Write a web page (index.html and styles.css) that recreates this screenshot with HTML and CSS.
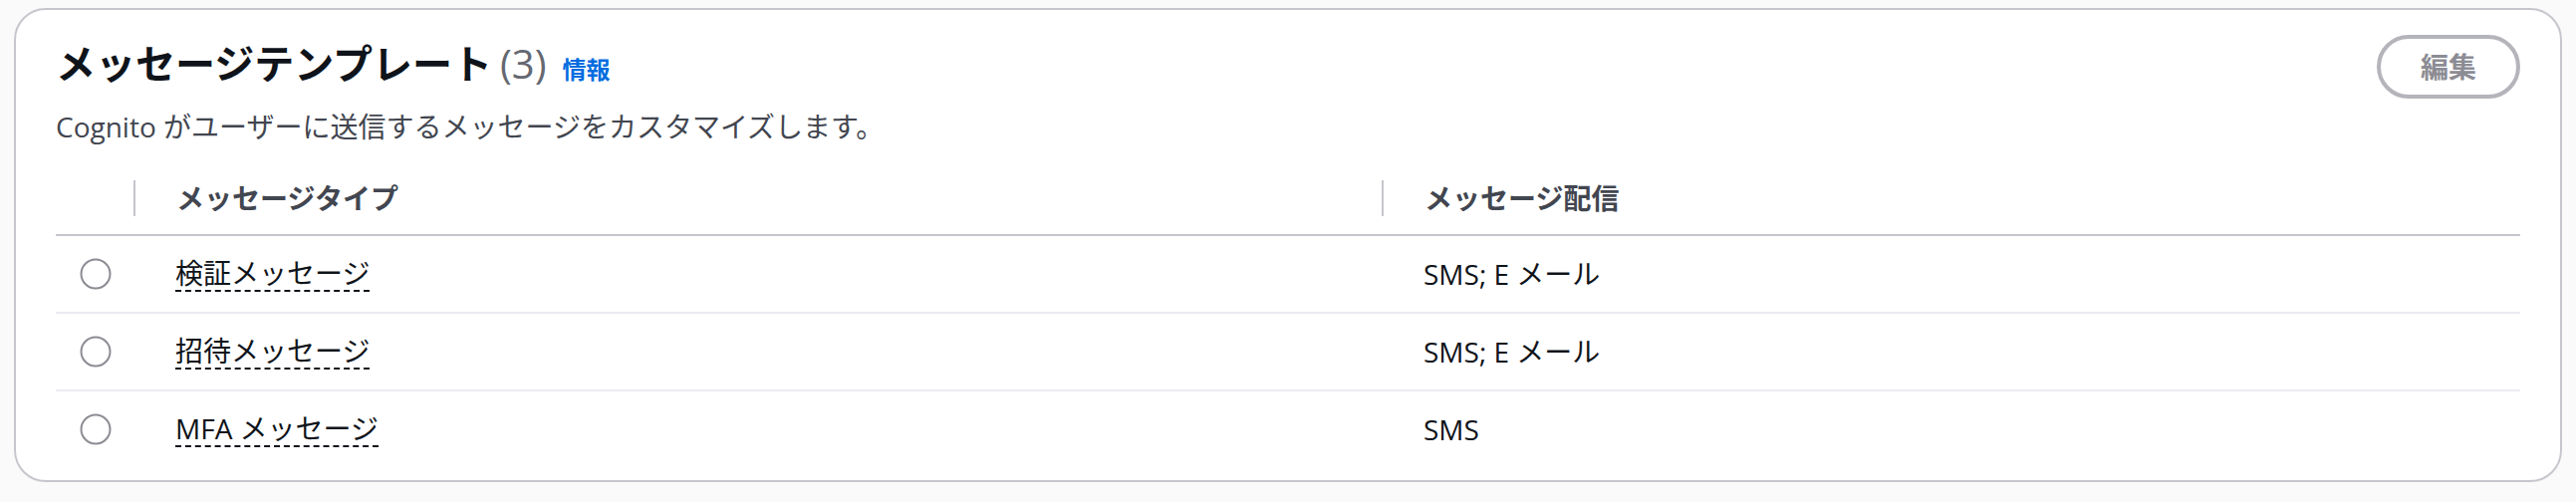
FILE: index.html
```html
<!DOCTYPE html>
<html lang="ja">
<head>
<meta charset="utf-8">
<title>メッセージテンプレート</title>
<link rel="stylesheet" href="styles.css">
</head>
<body>
<div class="container">
  <div class="header">
    <div class="header-top">
      <h2 class="title">メッセージテンプレート <span class="counter">(3)</span><a class="info" href="#">情報</a></h2>
      <button class="btn" disabled>編集</button>
    </div>
    <p class="desc">Cognito がユーザーに送信するメッセージをカスタマイズします。</p>
  </div>
  <div class="table">
    <div class="row head">
      <div class="cell sel"></div>
      <div class="cell th"><div class="th-inner">メッセージタイプ</div></div>
      <div class="cell th"><div class="th-inner">メッセージ配信</div></div>
    </div>
    <div class="row">
      <div class="cell sel"><svg class="radio" width="32" height="32" viewBox="0 0 32 32"><circle cx="16" cy="16" r="14.5" fill="#fff" stroke="#8c8c94" stroke-width="2"/></svg></div>
      <div class="cell td"><span class="trigger">検証メッセージ</span></div>
      <div class="cell td">SMS; E メール</div>
    </div>
    <div class="row">
      <div class="cell sel"><svg class="radio" width="32" height="32" viewBox="0 0 32 32"><circle cx="16" cy="16" r="14.5" fill="#fff" stroke="#8c8c94" stroke-width="2"/></svg></div>
      <div class="cell td"><span class="trigger">招待メッセージ</span></div>
      <div class="cell td">SMS; E メール</div>
    </div>
    <div class="row last">
      <div class="cell sel"><svg class="radio" width="32" height="32" viewBox="0 0 32 32"><circle cx="16" cy="16" r="14.5" fill="#fff" stroke="#8c8c94" stroke-width="2"/></svg></div>
      <div class="cell td"><span class="trigger">MFA メッセージ</span></div>
      <div class="cell td">SMS</div>
    </div>
  </div>
</div>
</body>
</html>
```

FILE: styles.css
```css
* { box-sizing: border-box; }

html, body {
  margin: 0;
  padding: 0;
  background: #fafafa;
}

body {
  font-family: "Open Sans", "Noto Sans CJK JP", sans-serif;
  font-size: 28px;
  line-height: 40px;
  color: #0f141a;
}

.container {
  margin: 8px 14px 0;
  background: #ffffff;
  border: 2px solid #c6c6cd;
  border-radius: 32px;
  padding-bottom: 13px;
}

.header {
  padding: 25px 40px 0;
}

.header-top {
  display: flex;
  align-items: center;
  justify-content: space-between;
  height: 64px;
}

.title {
  margin: 0;
  font-size: 40px;
  line-height: 48px;
  font-weight: 700;
  color: #0f141a;
  display: flex;
  align-items: baseline;
}

.counter {
  font-weight: 400;
  color: #656871;
  margin-left: 8px;
}

.info {
  font-size: 24px;
  font-weight: 700;
  color: #006ce0;
  text-decoration: none;
  margin-left: 16px;
}

.btn {
  height: 64px;
  padding: 0 40px;
  border: 4px solid #b4b4bb;
  border-radius: 32px;
  background: #ffffff;
  color: #8c8c94;
  font-family: "Open Sans", "Noto Sans CJK JP", sans-serif;
  font-size: 28px;
  font-weight: 700;
  line-height: 40px;
}

.desc {
  margin: 8px 0 0;
  color: #424650;
  font-size: 28px;
  line-height: 40px;
}

.table {
  margin: 16px 40px 0;
}

.row {
  display: grid;
  grid-template-columns: 78px 1253px 1fr;
  height: 78px;
  border-bottom: 2px solid #ebebf0;
}

.row.head {
  height: 74px;
  border-bottom: 2px solid #c6c6cd;
}

.row.last {
  border-bottom: none;
  height: 76px;
}

.cell {
  display: flex;
  align-items: center;
}

.sel {
  padding-left: 24px;
}

.radio {
  display: block;
}

.th-inner {
  height: 36px;
  line-height: 36px;
  border-left: 2px solid #c6c6cd;
  padding-left: 41px;
  font-weight: 700;
  color: #424650;
}

.td {
  padding-left: 42px;
}

.trigger {
  display: inline-block;
  line-height: 34px;
  border-bottom: 2px dashed #0f141a;
}
```
